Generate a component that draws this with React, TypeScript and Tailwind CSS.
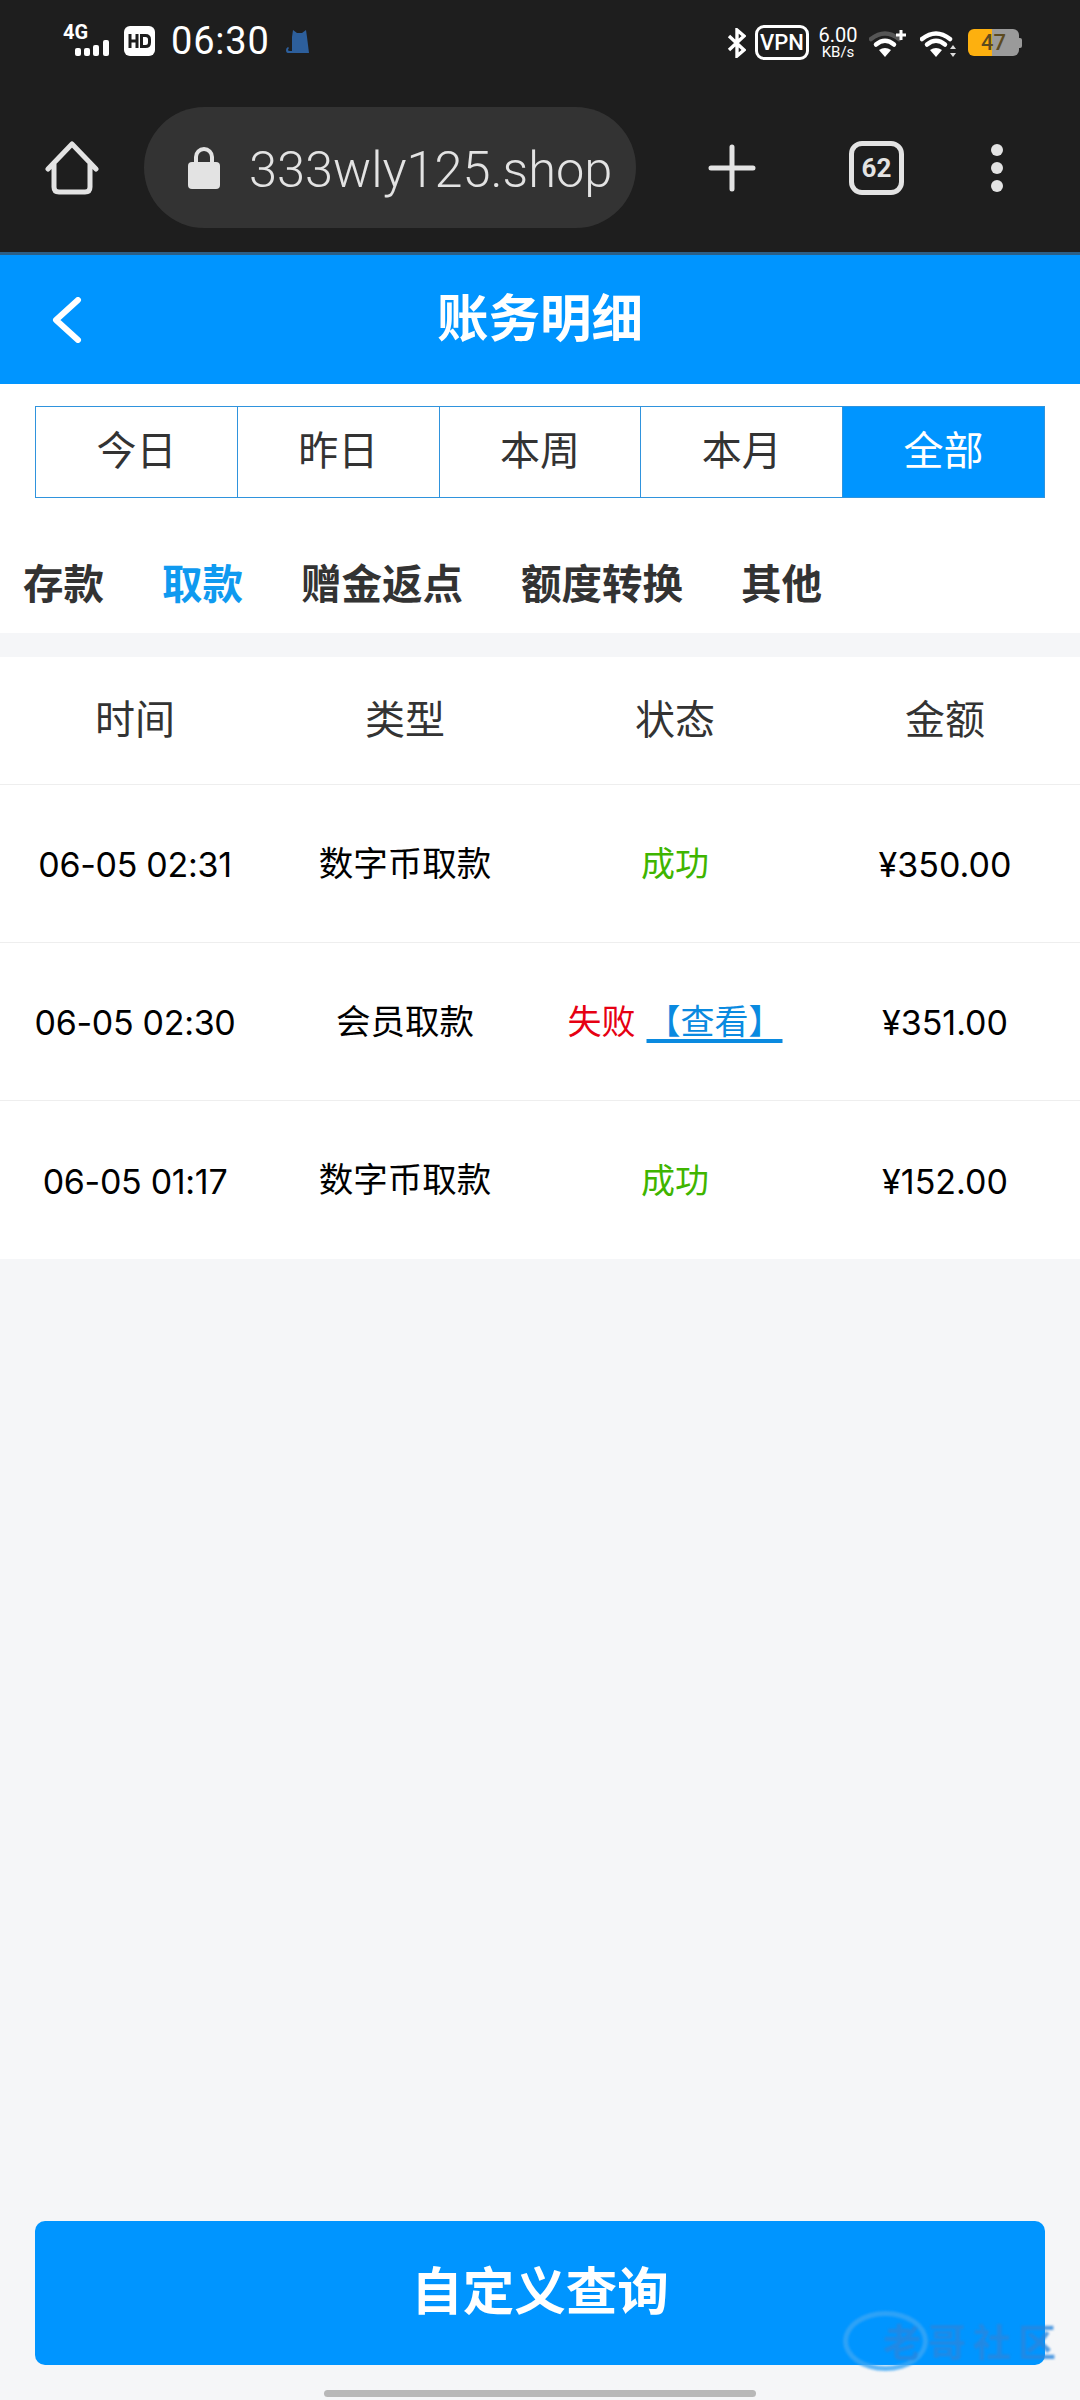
import React from 'react';

const cjk = 'font-["Roboto","Noto_Sans_CJK_SC",sans-serif]';

const ranges = ['今日', '昨日', '本周', '本月', '全部'];
const kinds = ['存款', '取款', '赠金返点', '额度转换', '其他'];
const columns = ['时间', '类型', '状态', '金额'];
const rows = [
  { time: '06-05 02:31', type: '数字币取款', ok: true, amount: '¥350.00' },
  { time: '06-05 02:30', type: '会员取款', ok: false, amount: '¥351.00' },
  { time: '06-05 01:17', type: '数字币取款', ok: true, amount: '¥152.00' },
];

function Wifi({ plus }: { plus?: boolean }) {
  return (
    <svg width="39" height="30" viewBox="0 0 39 30" fill="none">
      <path d="M2 11 Q16 0 30 11" stroke={plus ? '#555' : '#fff'} strokeWidth="4.5" strokeLinecap="round" />
      <path d="M7 16.5 Q16 9 25 16.5" stroke="#fff" strokeWidth="4.5" strokeLinecap="round" />
      <path d="M16 29 L10 22 Q16 18 22 22 Z" fill="#fff" />
      {plus ? (
        <path d="M27 7h10M32 2v10" stroke="#fff" strokeWidth="3" />
      ) : (
        <path d="M33 17l3 4h-6zM33 29l-3-4h6z" fill="#ddd" />
      )}
    </svg>
  );
}

function StatusBar() {
  return (
    <div className='flex h-[85px] items-start justify-between pl-[63px] pr-[58px] pt-[25px] font-["Roboto",sans-serif] text-white'>
      <div className="flex items-center">
        <div className="relative h-[32px] w-[48px]">
          <span className="absolute left-0 top-[-3px] text-[20px] font-bold leading-[20px]">4G</span>
          <svg className="absolute left-[12px] top-[15px]" width="35" height="17" viewBox="0 0 35 17" fill="#fff">
            <rect x="0" y="8" width="6" height="8" rx="2" />
            <rect x="9" y="8" width="6" height="8" rx="2" />
            <rect x="18" y="5" width="6" height="11" rx="2" />
            <rect x="28" y="0" width="6" height="16" rx="2" />
          </svg>
        </div>
        <div className="ml-[13px] flex h-[30px] w-[31px] items-center justify-center rounded-[6px] bg-white">
          <svg width="23" height="14" viewBox="0 0 23 14" fill="none" stroke="#1e1e1e" strokeWidth="3">
            <path d="M2 0v14M9 0v14M2 7h7M13.5 1.5h4q4 0 4 4v3q0 4-4 4h-4z" />
          </svg>
        </div>
        <span className="ml-[16px] text-[38px] font-normal leading-[32px] tracking-[0.8px]">06:30</span>
        <svg className="ml-[16px]" width="26" height="25" viewBox="0 0 26 25" fill="#2d5f9c">
          <path d="M6 24V8L7 1l4 3h5l4-3 1 7 2 16zM6 24H2Q0 24 0 21q0-2 2-3l1 1q-1 1-1 2t2 1h2z" />
        </svg>
      </div>
      <div className="flex items-center">
        <svg width="19" height="30" viewBox="0 0 19 30" fill="none" stroke="#fff" strokeWidth="3.4">
          <path d="M2 8l15 14-7 6V2l7 6L2 22" />
        </svg>
        <div className="ml-[9px] flex h-[35px] w-[54px] items-center justify-center rounded-[9px] border-[3px] border-white text-[22px] font-medium leading-none">
          VPN
        </div>
        <div className="ml-[9px] flex w-[40px] flex-col items-center gap-[3px]">
          <span className="text-[20px] font-normal leading-[15px]">6.00</span>
          <span className="text-[15px] font-normal leading-[12px]">KB/s</span>
        </div>
        <div className="ml-[11px]">
          <Wifi plus />
        </div>
        <div className="ml-[12px]">
          <Wifi />
        </div>
        <div className="ml-[9px] flex items-center">
          <div className="flex h-[27px] w-[51px] items-center justify-center overflow-hidden rounded-[6px] bg-[linear-gradient(90deg,#fdb00f_0,#fdb00f_48%,#9a9a9a_48%,#9a9a9a_100%)] text-[22px] font-medium leading-none text-[#5c4a1f]">
            47
          </div>
          <div className="h-[10px] w-[3px] rounded-r-[2px] bg-[#9a9a9a]" />
        </div>
      </div>
    </div>
  );
}

function BrowserBar() {
  return (
    <div className='flex h-[170px] items-start border-b-[3px] border-[#2c5f86] pl-[45px] pr-[77px] pt-[22px] font-["Roboto",sans-serif] text-[#e3e3e3]'>
      <svg className="mt-[34px]" width="54" height="54" viewBox="0 0 54 54" fill="none" stroke="#e3e3e3" strokeWidth="5" strokeLinecap="round" strokeLinejoin="round">
        <path d="M3 28L27 3l24 25M45 22v24q0 5-5 5H14q-5 0-5-5V22" />
      </svg>
      <div className="ml-[45px] flex h-[121px] w-[492px] items-center rounded-full bg-[#333333] pl-[44px]">
        <svg width="32" height="43" viewBox="0 0 32 43" fill="#e3e3e3">
          <path d="M8 18v-7a8 8 0 0 1 16 0v7" fill="none" stroke="#e3e3e3" strokeWidth="4" />
          <rect x="0" y="16" width="32" height="27" rx="4" />
        </svg>
        <span className="ml-[29px] pt-[6px] text-[50.5px] font-light leading-none">333wly125.shop</span>
      </div>
      <svg className="ml-[72px] mt-[37px]" width="48" height="48" viewBox="0 0 48 48" stroke="#e3e3e3" strokeWidth="5" strokeLinecap="round">
        <path d="M3 24h42M24 3v42" />
      </svg>
      <div className="ml-[93px] mt-[34px] flex h-[54px] w-[55px] items-center justify-center rounded-[13px] border-[5px] border-[#e3e3e3] text-[26px] font-bold leading-none">
        62
      </div>
      <div className="ml-[87px] mt-[37px] flex flex-col gap-[6px]">
        <div className="size-[12px] rounded-full bg-[#e3e3e3]" />
        <div className="size-[12px] rounded-full bg-[#e3e3e3]" />
        <div className="size-[12px] rounded-full bg-[#e3e3e3]" />
      </div>
    </div>
  );
}

export default function App() {
  return (
    <div className={`relative flex h-[2400px] w-[1080px] flex-col overflow-hidden bg-[#f5f6f8] ${cjk}`}>
      <div className="bg-[#1e1e1e]">
        <StatusBar />
        <BrowserBar />
      </div>

      <div className="flex h-[129px] items-center bg-[#0095ff] pl-[52px] text-white">
        <svg width="30" height="46" viewBox="0 0 30 46" fill="none" stroke="#fff" strokeWidth="6" strokeLinecap="round" strokeLinejoin="round">
          <path d="M26 3L4 23l22 20" />
        </svg>
        <h1 className="ml-[355px] text-[51.5px] font-bold leading-none">账务明细</h1>
      </div>

      <div className="flex flex-col bg-white px-[35px] pt-[22px]">
        <div className="flex h-[92px] border border-[#2f93dd]">
          {ranges.map((r, i) => (
            <div
              key={r}
              className={
                i === 4
                  ? 'flex flex-1 items-center justify-center bg-[#0095ff] text-[40px] text-white'
                  : 'flex flex-1 items-center justify-center border-r border-[#2f93dd] text-[40px] text-[#333333]'
              }
            >
              {r}
            </div>
          ))}
        </div>
      </div>

      <div className="flex h-[135px] items-center gap-[58px] bg-white pl-[23px] pt-[40px]">
        {kinds.map((k, i) => (
          <span
            key={k}
            className={i === 1 ? 'text-[40.5px] font-bold text-[#0f9af0]' : 'text-[40.5px] font-bold text-[#333333]'}
          >
            {k}
          </span>
        ))}
      </div>

      <div className="mt-[24px] bg-white">
        <div className="grid h-[128px] grid-cols-4 items-center border-b border-[#eeeeee]">
          {columns.map((c) => (
            <div key={c} className="text-center text-[40px] text-[#333333]">
              {c}
            </div>
          ))}
        </div>
        {rows.map((row, i) => (
          <div
            key={row.time}
            className={
              i < 2
                ? 'grid h-[158px] grid-cols-4 items-center border-b border-[#eeeeee] pt-[2px] text-center text-black'
                : 'grid h-[158px] grid-cols-4 items-center pt-[2px] text-center text-black'
            }
          >
            <div className='font-["Inter",sans-serif] text-[34px] tracking-[-0.3px]'>{row.time}</div>
            <div className="text-[34.5px]">{row.type}</div>
            <div className="whitespace-nowrap text-[34px]">
              {row.ok ? (
                <span className="text-[#3fb500]">成功</span>
              ) : (
                <>
                  <span className="text-[#e60012]">失败</span>
                  <span className="ml-[11px] text-[#0a8ae0] underline decoration-[4px] underline-offset-[5px]">【查看】</span>
                </>
              )}
            </div>
            <div className='font-["Inter",sans-serif] text-[34px]'>{row.amount}</div>
          </div>
        ))}
      </div>

      <div className="mt-auto flex flex-col items-center px-[35px] pb-[3px]">
        <button className="flex h-[144px] w-full items-center justify-center rounded-[10px] bg-[#0095ff] text-[51.5px] font-bold text-white">
          自定义查询
        </button>
        <div className="mt-[25px] h-[7px] w-[432px] rounded-full bg-[#b8b8b8]" />
      </div>

      {/* forum watermark sitting over the button corner */}
      <div className="absolute left-[843px] top-[2307px] h-[65px] w-[220px] opacity-80 blur-[1px]">
        <div className="absolute left-0 top-[4px] h-[60px] w-[85px] rounded-[50%] border-[5px] border-[#3aa6f5]" />
        <span className="absolute left-[40px] top-[14px] whitespace-nowrap text-[38px] font-bold leading-[44px] tracking-[7px] text-[#2a86dd]">
          老哥社区
        </span>
      </div>
    </div>
  );
}
